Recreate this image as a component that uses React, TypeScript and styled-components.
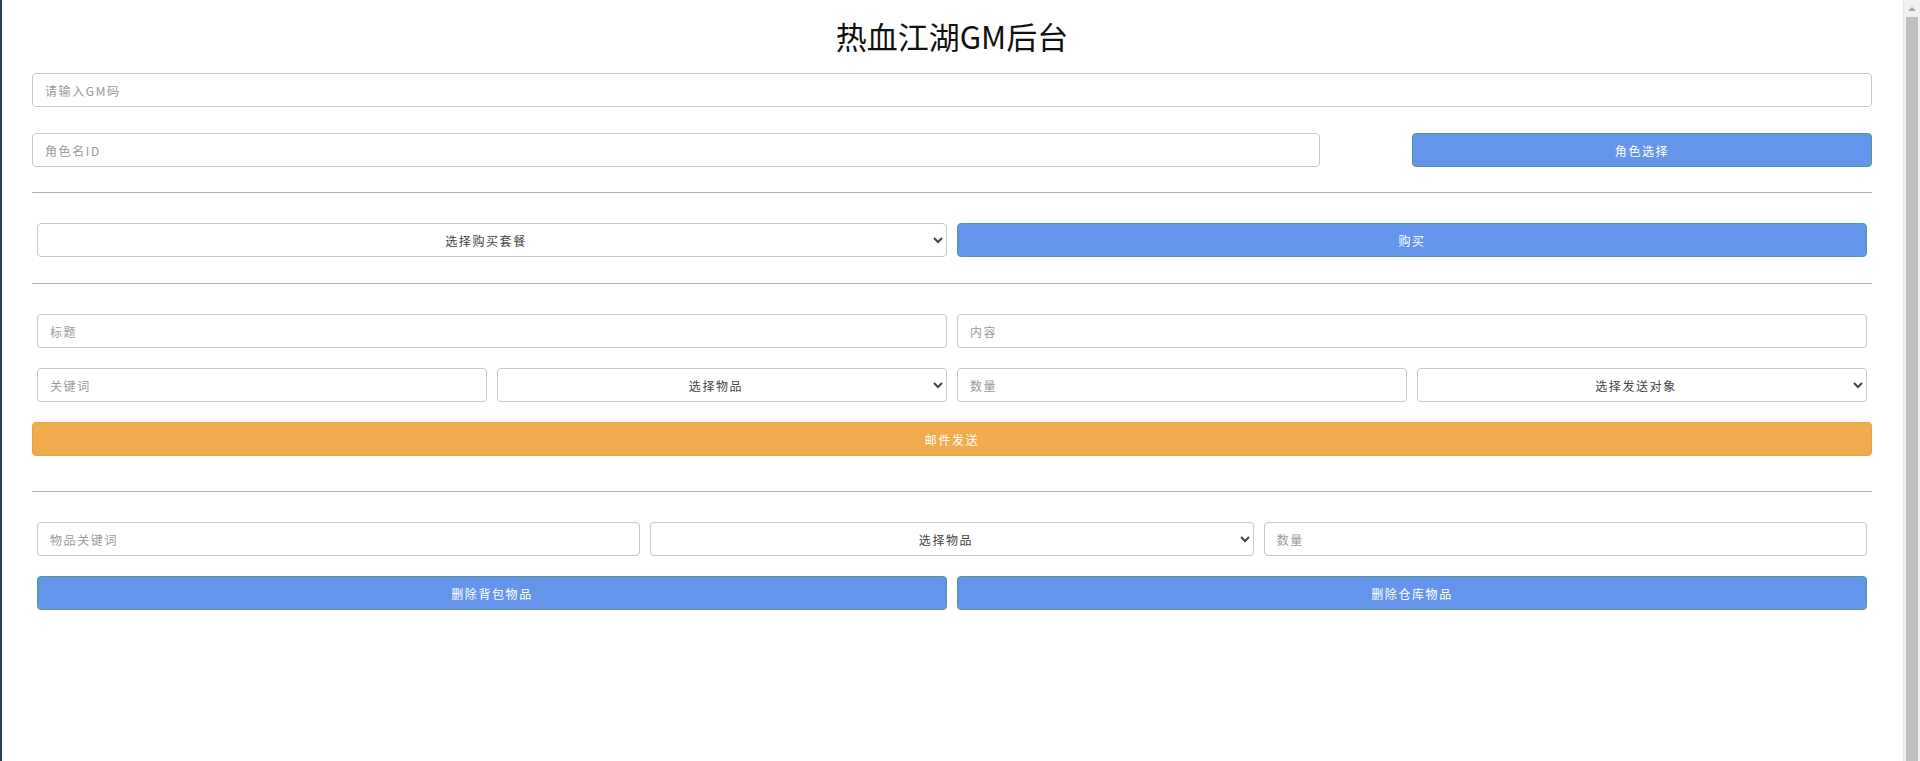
import React from 'react';
import styled, { createGlobalStyle } from 'styled-components';

const GlobalStyle = createGlobalStyle`
  html, body {
    margin: 0;
    padding: 0;
    background: #ffffff;
    font-family: "Noto Sans CJK SC", "Noto Sans", sans-serif;
  }
  * {
    box-sizing: border-box;
  }
`;

const Page = styled.div`
  display: flex;
  height: 100vh;
  overflow: hidden;
  border-left: 2px solid #2c3d5b;
`;

const Main = styled.main`
  flex: 1;
  padding: 0 31px 0 30px;
`;

const Title = styled.h1`
  margin: 0;
  padding-top: 17px;
  height: 73px;
  text-align: center;
  font-size: 31px;
  font-weight: 400;
  line-height: 38px;
  color: #111;
`;

const Field = styled.input`
  display: block;
  width: 100%;
  height: 34px;
  padding: 0 12px;
  border: 1px solid #c9c9c9;
  border-radius: 4px;
  background: #fff;
  font-family: inherit;
  font-size: 12px;
  letter-spacing: 1.6px;
  color: #333;
  outline: none;

  &::placeholder {
    color: #9a9a9a;
  }
`;

const Select = styled.select`
  display: block;
  width: 100%;
  height: 34px;
  padding: 0 8px;
  border: 1px solid #c9c9c9;
  border-radius: 4px;
  background: #fff;
  font-family: inherit;
  font-size: 12px;
  letter-spacing: 1.6px;
  color: #444;
  text-align: center;
  text-align-last: center;
  outline: none;
`;

const Button = styled.button<{ $tone?: 'blue' | 'orange' }>`
  display: block;
  width: 100%;
  height: 34px;
  border: 1px solid ${({ $tone }) => ($tone === 'orange' ? '#e6a243' : '#4f9a92')};
  border-radius: 4px;
  background: ${({ $tone }) => ($tone === 'orange' ? '#efab4c' : '#6495ea')};
  color: #fff;
  font-family: inherit;
  font-size: 12px;
  letter-spacing: 1.6px;
  cursor: pointer;
`;

const GmRow = styled.div`
  margin-bottom: 26px;
`;

const RoleRow = styled.div`
  display: flex;
  justify-content: space-between;

  & > :first-child {
    width: 70%;
  }
  & > :last-child {
    width: 25%;
  }
`;

const Divider = styled.hr<{ $top?: number }>`
  margin: ${({ $top }) => $top ?? 25}px 0 30px;
  border: none;
  border-top: 1px solid #b4b4b4;
`;

const Grid = styled.div<{ $cols: number }>`
  display: grid;
  grid-template-columns: repeat(${({ $cols }) => $cols}, 1fr);
  gap: 10px;
  padding: 0 5px;
`;

const Stack = styled.div`
  display: flex;
  flex-direction: column;
  gap: 20px;
`;

const Scrollbar = styled.div`
  width: 17px;
  display: flex;
  flex-direction: column;
  background: #f1f1f1;
  border-left: 1px solid #e8e8e8;
`;

const ScrollArrow = styled.div`
  height: 17px;
  display: flex;
  align-items: center;
  justify-content: center;

  &::before {
    content: '';
    width: 0;
    height: 0;
    border-left: 4px solid transparent;
    border-right: 4px solid transparent;
    border-bottom: 4px solid #a3a3a3;
  }
`;

const ScrollThumb = styled.div`
  flex: 1;
  margin: 0 2px;
  background: #c1c1c1;
`;

export default function App() {
  return (
    <>
      <GlobalStyle />
      <Page>
        <Main>
          <Title>热血江湖GM后台</Title>

          <GmRow>
            <Field placeholder="请输入GM码" />
          </GmRow>
          <RoleRow>
            <Field placeholder="角色名ID" />
            <Button>角色选择</Button>
          </RoleRow>

          <Divider />

          <Grid $cols={2}>
            <Select defaultValue="">
              <option value="">选择购买套餐</option>
            </Select>
            <Button>购买</Button>
          </Grid>

          <Divider $top={26} />

          <Stack>
            <Grid $cols={2}>
              <Field placeholder="标题" />
              <Field placeholder="内容" />
            </Grid>
            <Grid $cols={4}>
              <Field placeholder="关键词" />
              <Select defaultValue="">
                <option value="">选择物品</option>
              </Select>
              <Field placeholder="数量" />
              <Select defaultValue="">
                <option value="">选择发送对象</option>
              </Select>
            </Grid>
            <Button $tone="orange">邮件发送</Button>
          </Stack>

          <Divider $top={35} />

          <Stack>
            <Grid $cols={3}>
              <Field placeholder="物品关键词" />
              <Select defaultValue="">
                <option value="">选择物品</option>
              </Select>
              <Field placeholder="数量" />
            </Grid>
            <Grid $cols={2}>
              <Button>删除背包物品</Button>
              <Button>删除仓库物品</Button>
            </Grid>
          </Stack>
        </Main>
        <Scrollbar>
          <ScrollArrow />
          <ScrollThumb />
        </Scrollbar>
      </Page>
    </>
  );
}
